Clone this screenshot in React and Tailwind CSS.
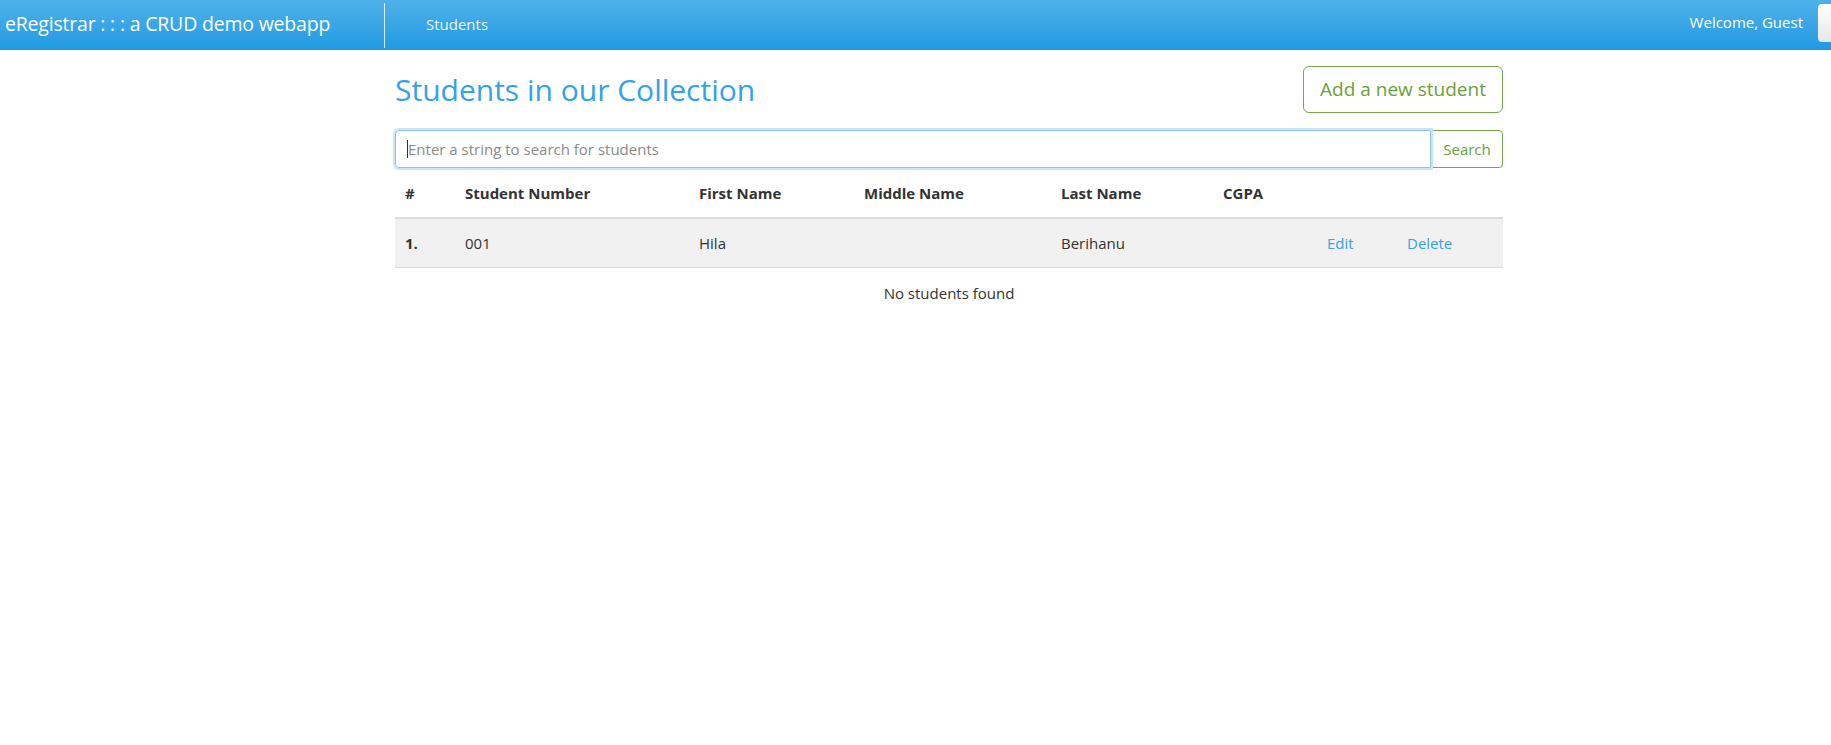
import React from 'react';

const students = [
  { id: 1, number: '001', first: 'Hila', middle: '', last: 'Berihanu', cgpa: '' }
];

const cols = 'grid grid-cols-[60px_234px_165px_197px_162px_104px_80px_106px]';

export default function App() {
  return (
    <div className="min-h-screen bg-white text-[#333] font-['Open_Sans',sans-serif]">
      {/* navbar */}
      <nav className="h-[50px] w-full overflow-hidden flex items-center bg-gradient-to-b from-[#4eb1ea] to-[#1d9ae2] text-white">
        <a className="pl-[5px] text-[19.5px] tracking-[-0.2px] w-[384px] whitespace-nowrap mb-[2px]">eRegistrar : : : a CRUD demo webapp</a>
        <div className="w-px h-[45px] bg-white/80 self-start mt-[3px]" />
        <a className="ml-[41px] text-[15px] text-[#eaf5fd] mb-[2px]">Students</a>
        <span className="ml-auto text-[15px] mb-[5px]">Welcome, Guest</span>
        <button className="ml-[15px] w-[13px] h-[38px] mb-[5px] rounded-l-[4px] bg-gradient-to-b from-white to-[#e6e6e6]" />
      </nav>

      <main className="ml-[395px] w-[1108px]">
        <div className="flex items-center justify-between mt-[16px]">
          <h2 className="text-[30px] text-[#33a2e8] leading-[33px]">Students in our Collection</h2>
          <button className="h-[47px] w-[200px] border border-[#74a94a] rounded-[6px] text-[19px] text-[#6a9f3c]">
            Add a new student
          </button>
        </div>

        <div className="flex mt-[17px] h-[38px]">
          <div className="relative flex-1">
            <input
              className="w-full h-full border border-[#8fc3ea] rounded-l-[4px] px-[12px] text-[15px] outline-none shadow-[0_0_0_2px_#c9e4f7] placeholder:text-[#8a8a8a]"
              placeholder="Enter a string to search for students"
            />
            <span className="absolute left-[12px] top-[10px] w-px h-[18px] bg-[#333]" />
          </div>
          <button className="w-[72px] border border-[#74a94a] rounded-r-[4px] text-[15px] text-[#6a9f3c]">Search</button>
        </div>

        <div className="text-[15px]">
          <div className={`${cols} h-[51px] pt-[2px] items-center font-bold border-b-2 border-[#dddddd]`}>
            <div className="pl-[10px]">#</div>
            <div className="pl-[10px]">Student Number</div>
            <div className="pl-[10px]">First Name</div>
            <div className="pl-[10px]">Middle Name</div>
            <div className="pl-[10px]">Last Name</div>
            <div className="pl-[10px]">CGPA</div>
            <div />
            <div />
          </div>
          {students.map((s) => (
            <div key={s.id} className={`${cols} h-[49px] items-center bg-[#f1f1f1] border-b border-[#dddddd]`}>
              <div className="pl-[10px] font-bold">{s.id}.</div>
              <div className="pl-[10px]">{s.number}</div>
              <div className="pl-[10px]">{s.first}</div>
              <div className="pl-[10px]">{s.middle}</div>
              <div className="pl-[10px]">{s.last}</div>
              <div className="pl-[10px]">{s.cgpa}</div>
              <div className="pl-[10px] text-[#3aa0e6]">Edit</div>
              <div className="pl-[10px] text-[#3aa0e6]">Delete</div>
            </div>
          ))}
          <p className="text-center mt-[15px] leading-[20px]">No students found</p>
        </div>
      </main>
    </div>
  );
}
